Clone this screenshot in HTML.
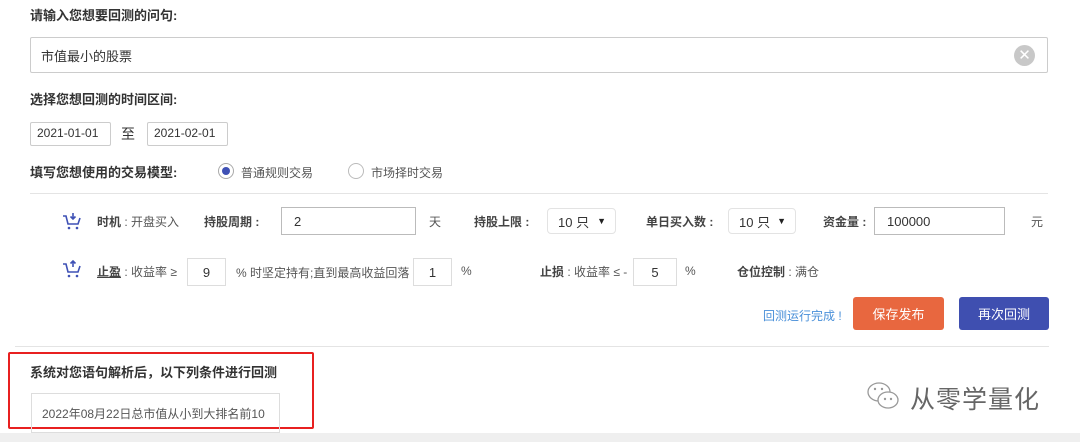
<!DOCTYPE html>
<html><head><meta charset="utf-8"><style>
*{margin:0;padding:0;box-sizing:border-box}
body{width:1080px;height:442px;background:#fff;position:relative;overflow:hidden;font-family:"Liberation Sans","Noto Sans CJK SC",sans-serif;font-size:12px;color:#555}
.a{position:absolute;white-space:nowrap}
.h{font-size:13px;font-weight:bold;color:#333}
.box{position:absolute;border:1px solid #ccc;background:#fff;border-radius:2px}
.b{font-weight:bold;color:#444}
.inp{position:absolute;border:1px solid #bbb;font-size:13px;color:#333;display:flex;align-items:center;background:#fff}
.sel{position:absolute;border:1px solid #e3e3e3;border-radius:4px;font-size:13px;color:#333;display:flex;align-items:center;padding-left:10px}
.sel:after{content:"▼";position:absolute;right:9px;font-size:9px;color:#222}
.btn{position:absolute;color:#fff;font-size:13px;border-radius:3px;display:flex;align-items:center;justify-content:center}
.hr{position:absolute;height:1px;background:#e4e4e4}
</style></head><body>
<div class="a h" style="left:30px;top:5px">请输入您想要回测的问句:</div>
<div class="box" style="left:30px;top:37px;width:1018px;height:36px"></div>
<div class="a" style="left:41px;top:46px;font-size:13px;color:#333">市值最小的股票</div>
<div class="a" style="left:1014px;top:45px;width:21px;height:21px;border-radius:50%;background:#c8c8c8;color:#fff;font-size:15px;line-height:21px;text-align:center">✕</div>
<div class="a h" style="left:30px;top:89px">选择您想回测的时间区间:</div>
<div class="box" style="left:30px;top:122px;width:81px;height:24px"></div>
<div class="a" style="left:37px;top:126px;color:#333">2021-01-01</div>
<div class="a" style="left:121px;top:124px;font-size:14px;color:#333">至</div>
<div class="box" style="left:147px;top:122px;width:81px;height:24px"></div>
<div class="a" style="left:154px;top:126px;color:#333">2021-02-01</div>
<div class="a h" style="left:30px;top:162px">填写您想使用的交易模型:</div>
<div class="a" style="left:218px;top:163px;width:16px;height:16px;border-radius:50%;border:1px solid #aaa"></div>
<div class="a" style="left:222px;top:167px;width:8px;height:8px;border-radius:50%;background:#3f51b5"></div>
<div class="a" style="left:241px;top:164px;color:#555">普通规则交易</div>
<div class="a" style="left:348px;top:163px;width:16px;height:16px;border-radius:50%;border:1px solid #bbb"></div>
<div class="a" style="left:371px;top:164px;color:#555">市场择时交易</div>
<div class="hr" style="left:30px;top:193px;width:1018px"></div>

<svg class="a" style="left:62px;top:211px" width="20" height="20" viewBox="0 0 20 20"><path d="M1 5h3l2 8h10l2-6" fill="none" stroke="#3f51b5" stroke-width="1.6"/><path d="M11 2v6M8.5 5.5L11 8l2.5-2.5" fill="none" stroke="#3f51b5" stroke-width="1.6"/><circle cx="7" cy="17" r="1.3" fill="#3f51b5"/><circle cx="15" cy="17" r="1.3" fill="#3f51b5"/></svg>
<div class="a" style="left:97px;top:213px"><span class="b">时机</span> : 开盘买入</div>
<div class="a b" style="left:204px;top:213px">持股周期 :</div>
<div class="inp" style="left:281px;top:207px;width:135px;height:28px;padding-left:12px">2</div>
<div class="a" style="left:429px;top:213px">天</div>
<div class="a b" style="left:474px;top:213px">持股上限 :</div>
<div class="sel" style="left:547px;top:208px;width:69px;height:26px">10 只</div>
<div class="a b" style="left:646px;top:213px">单日买入数 :</div>
<div class="sel" style="left:728px;top:208px;width:68px;height:26px">10 只</div>
<div class="a b" style="left:823px;top:213px">资金量 :</div>
<div class="inp" style="left:874px;top:207px;width:131px;height:28px;padding-left:12px">100000</div>
<div class="a" style="left:1031px;top:213px">元</div>

<svg class="a" style="left:62px;top:259px" width="20" height="20" viewBox="0 0 20 20"><path d="M1 5h3l2 8h10l2-6" fill="none" stroke="#3f51b5" stroke-width="1.6"/><path d="M11 8V2M8.5 4.5L11 2l2.5 2.5" fill="none" stroke="#3f51b5" stroke-width="1.6"/><circle cx="7" cy="17" r="1.3" fill="#3f51b5"/><circle cx="15" cy="17" r="1.3" fill="#3f51b5"/></svg>
<div class="a" style="left:97px;top:263px"><span class="b" style="text-decoration:underline">止盈</span> : 收益率 ≥</div>
<div class="inp" style="left:187px;top:258px;width:39px;height:28px;border-color:#ddd;justify-content:center">9</div>
<div class="a" style="left:236px;top:264px">% 时坚定持有;直到最高收益回落</div>
<div class="inp" style="left:413px;top:258px;width:39px;height:28px;border-color:#ddd;justify-content:center">1</div>
<div class="a" style="left:461px;top:264px">%</div>
<div class="a" style="left:540px;top:263px"><span class="b">止损</span> : 收益率 ≤ -</div>
<div class="inp" style="left:633px;top:258px;width:44px;height:28px;border-color:#ddd;justify-content:center">5</div>
<div class="a" style="left:685px;top:264px">%</div>
<div class="a" style="left:737px;top:263px"><span class="b">仓位控制</span> : 满仓</div>

<div class="a" style="left:763px;top:307px;color:#4a90d9">回测运行完成 !</div>
<div class="btn" style="left:853px;top:297px;width:91px;height:33px;background:#e8673f">保存发布</div>
<div class="btn" style="left:959px;top:297px;width:90px;height:33px;background:#3f4fb0">再次回测</div>
<div class="hr" style="left:15px;top:346px;width:1034px"></div>

<div class="a" style="left:8px;top:352px;width:306px;height:77px;border:2px solid #e82020;border-radius:2px"></div>
<div class="a h" style="left:30px;top:362px;font-size:13px">系统对您语句解析后，以下列条件进行回测</div>
<div class="a" style="left:31px;top:393px;width:249px;height:40px;border:1px solid #ddd"></div>
<div class="a" style="left:42px;top:405px;font-size:12px;color:#555">2022年08月22日总市值从小到大排名前10</div>

<svg class="a" style="left:866px;top:379px" width="36" height="34" viewBox="0 0 36 34"><ellipse cx="13" cy="13" rx="11" ry="9" fill="none" stroke="#999" stroke-width="1.3"/><ellipse cx="22" cy="21" rx="10" ry="8" fill="#fff" stroke="#999" stroke-width="1.3"/><circle cx="19" cy="20" r="1.2" fill="#999"/><circle cx="25" cy="20" r="1.2" fill="#999"/><circle cx="9" cy="10" r="1.2" fill="#999"/><circle cx="16" cy="10" r="1.2" fill="#999"/></svg>
<div class="a" style="left:910px;top:380px;font-size:25px;color:#666;letter-spacing:1px">从零学量化</div>
<div class="a" style="left:0;top:433px;width:1080px;height:9px;background:#efefef"></div>
</body></html>
